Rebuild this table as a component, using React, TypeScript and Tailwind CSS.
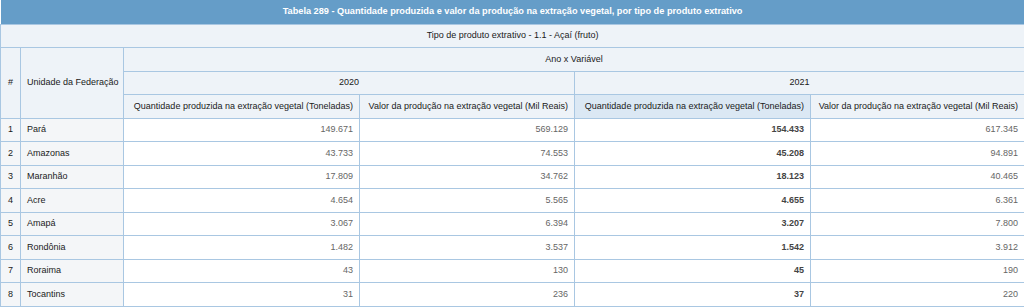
import React from "react";

const rows = [
  ["1", "Pará", "149.671", "569.129", "154.433", "617.345"],
  ["2", "Amazonas", "43.733", "74.553", "45.208", "94.891"],
  ["3", "Maranhão", "17.809", "34.762", "18.123", "40.465"],
  ["4", "Acre", "4.654", "5.565", "4.655", "6.361"],
  ["5", "Amapá", "3.067", "6.394", "3.207", "7.800"],
  ["6", "Rondônia", "1.482", "3.537", "1.542", "3.912"],
  ["7", "Roraima", "43", "130", "45", "190"],
  ["8", "Tocantins", "31", "236", "37", "220"],
];

const qtd = "Quantidade produzida na extração vegetal (Toneladas)";
const valor = "Valor da produção na extração vegetal (Mil Reais)";

export default function App() {
  const cell = "border border-[#a9c7e2] h-[23.5px] px-[6px]";
  const head = "bg-[#eef3f8] font-normal text-[9px] text-[#1a1a1a]";
  return (
    <div className="w-[1024px] h-[307px] overflow-hidden bg-white font-['Liberation_Sans',Arial,sans-serif] text-[9px] text-[#333]">
      <table className="w-full border-collapse table-fixed">
        <colgroup>
          <col className="w-[20px]" />
          <col className="w-[103px]" />
          <col className="w-[236px]" />
          <col className="w-[215px]" />
          <col className="w-[236px]" />
          <col className="w-[214px]" />
        </colgroup>
        <thead>
          <tr>
            <th colSpan={6} className="h-[24px] bg-[#659dc8] text-white font-bold text-[9.2px] text-center border-b border-[#a9c7e2]">
              Tabela 289 - Quantidade produzida e valor da produção na extração vegetal, por tipo de produto extrativo
            </th>
          </tr>
          <tr>
            <th colSpan={6} className={`${cell} ${head} text-center`}>
              Tipo de produto extrativo - 1.1 - Açaí (fruto)
            </th>
          </tr>
          <tr>
            <th rowSpan={3} className={`${cell} ${head} px-0 text-center`}>#</th>
            <th rowSpan={3} className={`${cell} ${head} text-left whitespace-nowrap`}>Unidade da Federação</th>
            <th colSpan={4} className={`${cell} ${head} text-center`}>Ano x Variável</th>
          </tr>
          <tr>
            <th colSpan={2} className={`${cell} ${head} text-center`}>2020</th>
            <th colSpan={2} className={`${cell} ${head} text-center`}>2021</th>
          </tr>
          <tr>
            <th className={`${cell} ${head} text-right whitespace-nowrap`}>{qtd}</th>
            <th className={`${cell} ${head} text-right whitespace-nowrap`}>{valor}</th>
            <th className={`${cell} ${head} text-right whitespace-nowrap !bg-[#dbe8f4]`}>{qtd}</th>
            <th className={`${cell} ${head} text-right whitespace-nowrap`}>{valor}</th>
          </tr>
        </thead>
        <tbody>
          {rows.map((r) => (
            <tr key={r[0]}>
              <td className={`${cell} px-0 text-center bg-[#f4f6f8] text-[#1a1a1a]`}>{r[0]}</td>
              <td className={`${cell} bg-[#f4f6f8] text-[#1a1a1a]`}>{r[1]}</td>
              <td className={`${cell} text-right text-[#666]`}>{r[2]}</td>
              <td className={`${cell} text-right text-[#666]`}>{r[3]}</td>
              <td className={`${cell} text-right font-bold text-[#444]`}>{r[4]}</td>
              <td className={`${cell} text-right text-[#666]`}>{r[5]}</td>
            </tr>
          ))}
        </tbody>
      </table>
    </div>
  );
}
